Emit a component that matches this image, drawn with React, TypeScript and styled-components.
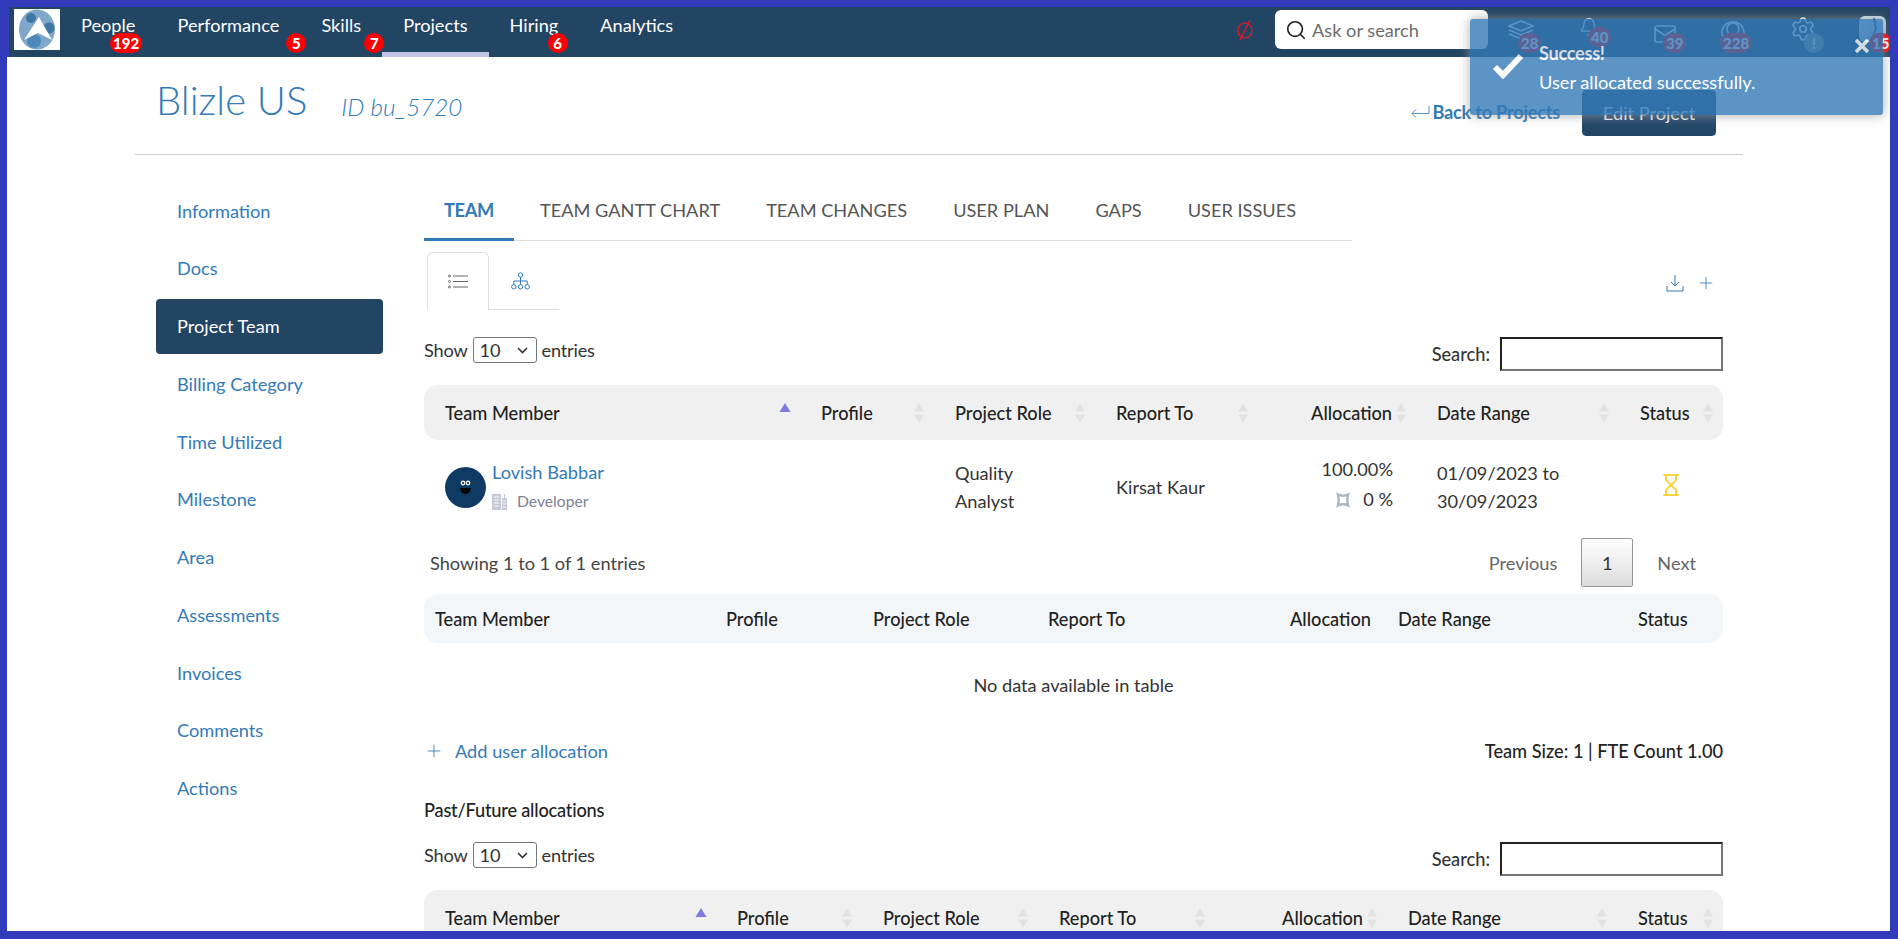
import React from "react";
import styled, { createGlobalStyle } from "styled-components";
import { Search, Bell, Mail, Settings, Plus, Hourglass } from "lucide-react";

const Global = createGlobalStyle`
  html, body { margin: 0; padding: 0; background: #fff; }
  body { font-family: Lato, "Open Sans", "Liberation Sans", sans-serif; color: #333; }
  * { box-sizing: border-box; }
`;

const Page = styled.div`
  width: 1898px; height: 939px; overflow: hidden; position: relative; background: #fff;
  border-style: solid; border-color: #323cbb; border-width: 7px 8px 8px 7px;
`;

/* top bar */
const Nav = styled.header`
  height: 50px; display: flex; background: #234564; border-left: 2px solid #323cbb;
`;
const LogoBox = styled.div`
  width: 46px; height: 41px; margin: 2px 0 0 5px; background: #fff; display: flex;
  align-items: center; justify-content: center;
`;
const NavItem = styled.a<{ $active?: boolean }>`
  position: relative; padding: 0 21px; height: 50px; line-height: 37px; color: #fff; font-size: 18.2px;
  border-bottom: 5px solid ${(p) => (p.$active ? "#c0c4e4" : "transparent")};
`;
const Badge = styled.span<{ $x: number; $y?: number; $bg?: string }>`
  position: absolute; left: ${(p) => p.$x}px; top: ${(p) => p.$y ?? 26}px; height: 20px; min-width: 20px;
  padding: 0 3px; border-radius: 10px; background: ${(p) => p.$bg ?? "#f00"}; color: #fff;
  font-size: 15px; font-weight: 900; line-height: 20px; text-align: center;
`;
const NavRight = styled.div`
  margin-left: auto; display: flex; align-items: flex-start; padding-right: 4px;
`;
const NoSign = styled.svg`
  width: 18px; height: 22px; margin: 12px 21px 0 0;
`;
const SearchBox = styled.div`
  width: 213px; height: 39px; margin-top: 3px; background: #fff; border-radius: 6px; display: flex;
  align-items: center; padding-left: 10px; gap: 5px; color: #666; font-size: 18.2px; color: #6c6c6c;
`;
const IconCell = styled.div<{ $ml: number; $w: number; $pt: number }>`
  position: relative; margin-left: ${(p) => p.$ml}px; width: ${(p) => p.$w}px; padding-top: ${(p) => p.$pt}px;
  color: #fff; line-height: 0;
`;
const UserThumb = styled.div`
  width: 27px; height: 26px; border-radius: 6px; background: linear-gradient(135deg, #e8eef5, #9db8d8);
  overflow: hidden;
`;

/* toast */
const Toast = styled.div`
  position: absolute; left: 1463px; top: 12px; width: 413px; height: 96px; background: #337ab7; opacity: .8;
  border-radius: 3px; box-shadow: 0 0 12px #999; color: #fff; padding: 23px 0 0 69px; font-size: 18.2px;
`;
const ToastCheck = styled.svg`
  position: absolute; left: 22px; top: 34px; width: 32px; height: 26px;
`;
const ToastTitle = styled.div`
  font-weight: 700; line-height: 22px; letter-spacing: -.3px;
`;
const ToastMsg = styled.div`
  line-height: 22px; margin-top: 7px;
`;
const ToastClose = styled.svg`
  position: absolute; right: 14px; top: 20px; width: 14px; height: 14px;
`;

/* page */
const Wrap = styled.div`
  margin-left: 128px; width: 1608px;
`;
const Header = styled.div`
  height: 98px; border-bottom: 1px solid #ccc; display: flex; align-items: flex-start; padding-left: 21px;
`;
const Title = styled.h1`
  margin: 18px 0 0; font-size: 40px; line-height: 50px; font-weight: 300; color: #337ab7;
`;
const SubId = styled.em`
  margin: 35px 0 0 34px; font-size: 24.2px; line-height: 30px; font-weight: 300; color: #337ab7;
`;
const HeadActions = styled.div`
  margin-left: auto; display: flex; align-items: flex-start; padding-right: 27px;
`;
const BackLink = styled.a`
  margin-top: 43px; display: flex; align-items: center; gap: 3px; color: #337ab7; font-size: 18.2px;
  font-weight: 700; line-height: 24px; letter-spacing: -.25px;
`;
const EditBtn = styled.button`
  margin: 33px 0 0 22px; width: 134px; height: 46px; border: 1px solid #234564; border-radius: 4px;
  background: linear-gradient(#2c5680, #234564); color: #eee; font: 400 18.2px Lato, sans-serif;
`;
const Body = styled.div`
  display: flex; padding-left: 21px; gap: 41px;
`;
const Side = styled.nav`
  width: 227px; margin-top: 28px; display: grid; grid-auto-rows: 55px; row-gap: 2.75px; align-self: flex-start;
`;
const SideItem = styled.a<{ $active?: boolean }>`
  display: flex; align-items: center; padding-left: 21px; border-radius: 4px; font-size: 18.2px;
  color: ${(p) => (p.$active ? "#fff" : "#337ab7")}; background: ${(p) => (p.$active ? "#234564" : "transparent")};
`;
const Main = styled.main`
  width: 1299px;
`;
const Tabs = styled.div`
  width: 928px; height: 57px; margin-top: 29px; display: flex; border-bottom: 1px solid #ddd;
`;
const Tab = styled.a<{ $active?: boolean }>`
  height: 57px; padding: 0 20px; margin-right: 6px; line-height: 52px; font-size: 18.2px; white-space: nowrap;
  font-weight: ${(p) => (p.$active ? 700 : 400)}; color: ${(p) => (p.$active ? "#337ab7" : "#555")};
  border-bottom: 3px solid ${(p) => (p.$active ? "#337ab7" : "transparent")};
  ${(p) => p.$active && "letter-spacing:-.3px;"}
`;
const SubRow = styled.div`
  margin-top: 11px; display: flex; justify-content: space-between; align-items: center; padding: 0 7px 0 3px;
`;
const SubTabs = styled.div`
  display: flex; height: 58px;
`;
const SubTab = styled.div<{ $active?: boolean }>`
  width: ${(p) => (p.$active ? 62 : 70)}px; display: flex; align-items: center; justify-content: ${(p) => (p.$active ? "center" : "flex-start")};
  padding-left: ${(p) => (p.$active ? 0 : 22)}px; color: ${(p) => (p.$active ? "#666" : "#337ab7")};
  border: 1px solid #ddd; border-width: ${(p) => (p.$active ? "1px 1px 0 1px" : "0 0 1px 0")};
  border-radius: ${(p) => (p.$active ? "6px 6px 0 0" : "0")};
`;
const Actions = styled.div`
  display: flex; align-items: center; gap: 12px; color: #337ab7; margin-top: 3px;
`;
const ToolRow = styled.div<{ $mt: number }>`
  margin-top: ${(p) => p.$mt}px; display: flex; justify-content: space-between; height: 34px; font-size: 18.2px;
`;
const ShowGroup = styled.div`
  display: flex; align-items: flex-start; gap: 5px; line-height: 26px; letter-spacing: -.2px;
`;
const Select = styled.div`
  width: 64px; height: 26px; border: 1px solid #767676; border-radius: 3px; padding-left: 6px; display: flex;
  align-items: center; justify-content: space-between; padding-right: 8px; font-size: 18.2px;
`;
const SearchGroup = styled.label`
  display: flex; align-items: center; gap: 10px; font-weight: 500;
`;
const SearchInput = styled.input`
  width: 223px; height: 34px; border: 2px inset #767676; background: #fff;
`;
const Grid = styled.div<{ $cols: string }>`
  display: grid; grid-template-columns: ${(p) => p.$cols};
`;
const HeadRow = styled(Grid)<{ $bg: string; $h: number; $mt: number }>`
  margin-top: ${(p) => p.$mt}px; height: ${(p) => p.$h}px; background: ${(p) => p.$bg}; border-radius: 14px;
  font-weight: 500; font-size: 18.2px; color: #222;
`;
const HeadCell = styled.div<{ $pl: number; $end?: boolean }>`
  display: flex; align-items: center; padding: 0 9px 0 ${(p) => p.$pl}px; white-space: nowrap;
  justify-content: ${(p) => (p.$end ? "flex-end" : "space-between")}; gap: 3px;
`;
const SortSvg = styled.svg`
  width: 12px; height: 22px; flex: none;
`;
const DataRow = styled(Grid)`
  height: 94px; font-size: 18.2px; align-items: center;
`;
const Cell = styled.div<{ $right?: boolean }>`
  padding: 0 8px 0 21px; line-height: 28px; text-align: ${(p) => (p.$right ? "right" : "left")};
`;
const RightCell = styled(Cell)`
  padding-right: 23px; margin-top: -7px; line-height: 30px;
`;
const Person = styled.div`
  display: flex; gap: 6px; align-items: flex-start; margin-top: -3px;
`;
const Avatar = styled.svg`
  width: 41px; height: 41px; margin-top: 8px; flex: none;
`;
const PersonName = styled.a`
  display: block; color: #337ab7; font-size: 18.2px; line-height: 26px;
`;
const PersonRole = styled.div`
  display: flex; align-items: center; gap: 10px; color: #7f7f95; font-size: 15.7px; line-height: 22px; margin-top: 5px;
`;
const AllocIcon = styled.svg`
  width: 16px; height: 16px; vertical-align: -2px; margin-right: 12px;
`;
const StatusIcon = styled.div`
  padding-left: 40px; color: #f7d53e; line-height: 0; margin-top: -5px;
`;
const Footer = styled.div`
  display: flex; justify-content: space-between; align-items: center; height: 49px; margin-top: 4px; padding: 0 27px 0 6px;
  font-size: 18.2px; color: #444;
`;
const Pager = styled.div`
  display: flex; align-items: center; color: #666; gap: 24px;
`;
const PageNo = styled.span`
  width: 52px; height: 49px; display: flex; align-items: center; justify-content: center; color: #333;
  border: 1px solid #979797; border-radius: 2px; background: linear-gradient(#fff, #dcdcdc);
`;
const EmptyRow = styled.div`
  height: 84px; display: flex; align-items: center; justify-content: center; font-size: 18.2px; color: #333;
`;
const AddRow = styled.div`
  display: flex; justify-content: space-between; align-items: center; height: 48px; font-size: 18.2px;
`;
const AddLink = styled.a`
  display: flex; align-items: center; gap: 11px; color: #337ab7;
`;
const TeamSize = styled.div`
  font-weight: 500; color: #222;
`;
const PastTitle = styled.div`
  margin-top: 19px; height: 32px; line-height: 32px; font-size: 18.2px; font-weight: 500; color: #222; letter-spacing: -.2px;
`;

const Sort = ({ active }: { active?: boolean }) => (
  <SortSvg viewBox="0 0 12 22">
    {active ? (
      <path d="M6 1 L11.5 10 H0.5 Z" fill="#7c7ce0" />
    ) : (
      <>
        <path d="M6 1 L11 9.5 H1 Z" fill="#e2e2e2" />
        <path d="M6 21 L11 12.5 H1 Z" fill="#e2e2e2" />
      </>
    )}
  </SortSvg>
);

const Logo = () => (
  <svg width="40" height="41" viewBox="0 0 40 41">
    <ellipse cx="20" cy="20.5" rx="18" ry="20" fill="#7ea7c9" />
    <circle cx="14" cy="9" r="5" fill="#3f76a3" />
    <circle cx="32" cy="19" r="5.5" fill="#3f76a3" />
    <circle cx="17" cy="32" r="7" fill="#4c88ba" />
    <path d="M22 8 L35 31 L21 24 L7 31 Z" fill="#fff" />
  </svg>
);
const ListIcon = () => (
  <svg width="20" height="15" viewBox="0 0 20 15" fill="none" stroke="currentColor" strokeWidth="1">
    <path d="M5 2h15M5 7.5h15M5 13h15" />
    <circle cx="1.5" cy="2" r="1" />
    <circle cx="1.5" cy="7.5" r="1" />
    <circle cx="1.5" cy="13" r="1" />
  </svg>
);
const TreeIcon = () => (
  <svg width="19" height="18" viewBox="0 0 19 18" fill="none" stroke="currentColor" strokeWidth="1">
    <circle cx="9.5" cy="3" r="2.2" />
    <path d="M9.5 5.2V9M2.8 12.5V9h13.4v3.5M9.5 9v3.5" />
    <circle cx="2.8" cy="14.8" r="2.2" />
    <circle cx="9.5" cy="14.8" r="2.2" />
    <circle cx="16.2" cy="14.8" r="2.2" />
  </svg>
);
const Download = () => (
  <svg width="18" height="18" viewBox="0 0 18 18" fill="none" stroke="currentColor" strokeWidth="1">
    <path d="M9 1v11M5 8l4 4 4-4M1 12v5h16v-5" />
  </svg>
);
const Layers = () => (
  <svg width="26" height="20" viewBox="0 0 26 20" fill="none" stroke="currentColor" strokeWidth="1.6">
    <path d="M13 1 L25 6 L13 11 L1 6 Z" />
    <path d="M1 10 L13 15 L25 10M1 14 L13 19 L25 14" />
  </svg>
);
const Ring = () => (
  <svg width="24" height="22" viewBox="0 0 24 22" fill="none" stroke="currentColor" strokeWidth="1.6">
    <path d="M3 21A11 11 0 1 1 21 21" />
    <path d="M7.5 15a6 6 0 1 1 9 0" />
  </svg>
);
const Cookie = () => (
  <Avatar viewBox="0 0 41 41">
    <circle cx="20.5" cy="20.5" r="20.5" fill="#0e3a63" />
    <circle cx="18" cy="16" r="2.4" fill="#eee" />
    <circle cx="23" cy="16" r="2.4" fill="#eee" />
    <circle cx="18" cy="16" r="1" fill="#111" />
    <circle cx="23" cy="16" r="1" fill="#111" />
    <path d="M15 21 H26 A5.5 6 0 0 1 15 21 Z" fill="#050505" />
  </Avatar>
);
const OfficeIcon = () => (
  <svg width="15" height="17" viewBox="0 0 15 17" fill="#c6c8d8">
    <path d="M0 1h9v16H0zM10 5h5v12h-5zM12 1h1v4h-1z" />
    <path d="M2 4h5M2 7h5M2 10h5M2 13h5M11 8h3M11 11h3M11 14h3" stroke="#fff" strokeWidth=".9" />
  </svg>
);
const AllocMark = () => (
  <AllocIcon viewBox="0 0 16 16" fill="none" stroke="#a5b7c8" strokeWidth="2.4">
    <path d="M3 2.5C6 4 10 4 13 2.5C12 6 12 10 13 13.5C10 12 6 12 3 13.5C4 10 4 6 3 2.5Z" />
  </AllocIcon>
);

const T1 = "376px 134px 161px 163px 158px 203px 104px";
const T2 = "291px 147px 175px 242px 108px 240px 96px";
const T3 = "292px 146px 176px 177px 172px 230px 106px";
const labels = ["Team Member", "Profile", "Project Role", "Report To", "Allocation", "Date Range", "Status"];
const side = ["Information", "Docs", "Project Team", "Billing Category", "Time Utilized", "Milestone", "Area", "Assessments", "Invoices", "Comments", "Actions"];
const tabs = ["TEAM", "TEAM GANTT CHART", "TEAM CHANGES", "USER PLAN", "GAPS", "USER ISSUES"];

const SortHead = ({ cols, mt }: { cols: string; mt: number }) => (
  <HeadRow $cols={cols} $bg="#f0f0f0" $h={55} $mt={mt}>
    {labels.map((l, i) => (
      <HeadCell key={l} $pl={21} $end={i === 4}>
        {l}
        <Sort active={i === 0} />
      </HeadCell>
    ))}
  </HeadRow>
);
const Tools = ({ mt }: { mt: number }) => (
  <ToolRow $mt={mt}>
    <ShowGroup>
      Show
      <Select>
        10
        <svg width="11" height="7" viewBox="0 0 11 7" fill="none" stroke="#333" strokeWidth="1.6">
          <path d="M1 1l4.5 4.5L10 1" />
        </svg>
      </Select>
      entries
    </ShowGroup>
    <SearchGroup>
      Search:
      <SearchInput aria-label="Search" />
    </SearchGroup>
  </ToolRow>
);

export default function App() {
  return (
    <Page>
      <Global />
      <Nav>
        <LogoBox>
          <Logo />
        </LogoBox>
        <NavItem>People<Badge $x={50}>192</Badge></NavItem>
        <NavItem>Performance<Badge $x={130}>5</Badge></NavItem>
        <NavItem>Skills<Badge $x={64}>7</Badge></NavItem>
        <NavItem $active>Projects</NavItem>
        <NavItem>Hiring<Badge $x={59}>6</Badge></NavItem>
        <NavItem>Analytics</NavItem>
        <NavRight>
          <NoSign viewBox="0 0 18 22" fill="none" stroke="#f0141e" strokeWidth="1.2">
            <ellipse cx="9" cy="11.5" rx="7" ry="7.5" />
            <path d="M14 1 L4 21" />
          </NoSign>
          <SearchBox>
            <Search size={22} color="#222" strokeWidth={1.8} />
            Ask or search
          </SearchBox>
          <IconCell $ml={20} $w={26} $pt={13}>
            <Layers />
            <Badge $x={10} $y={26}>28</Badge>
          </IconCell>
          <IconCell $ml={45} $w={18} $pt={10}>
            <Bell size={20} strokeWidth={1.6} />
            <Badge $x={9} $y={20}>40</Badge>
          </IconCell>
          <IconCell $ml={56} $w={24} $pt={15}>
            <Mail size={24} strokeWidth={1.6} />
            <Badge $x={10} $y={26}>39</Badge>
          </IconCell>
          <IconCell $ml={44} $w={24} $pt={11}>
            <Ring />
            <Badge $x={-1} $y={26}>228</Badge>
          </IconCell>
          <IconCell $ml={45} $w={26} $pt={9}>
            <Settings size={26} strokeWidth={1.6} />
            <Badge $x={14} $y={26} $bg="#7a8a92">!</Badge>
          </IconCell>
          <IconCell $ml={43} $w={27} $pt={9}>
            <UserThumb>
              <svg width="27" height="26" viewBox="0 0 27 26" fill="none" stroke="#2a5c9a" strokeWidth="2">
                <path d="M15 2 L17 12 L13 24" />
              </svg>
            </UserThumb>
            <Badge $x={10} $y={26}>15</Badge>
          </IconCell>
        </NavRight>
      </Nav>

      <Toast>
        <ToastCheck viewBox="0 0 32 26" fill="none" stroke="#fff" strokeWidth="6">
          <path d="M3 14 L11 22 L29 3" />
        </ToastCheck>
        <ToastTitle>Success!</ToastTitle>
        <ToastMsg>User allocated successfully.</ToastMsg>
        <ToastClose viewBox="0 0 14 14" stroke="#fff" strokeWidth="3.6">
          <path d="M1 1 L13 13 M13 1 L1 13" />
        </ToastClose>
      </Toast>

      <Wrap>
        <Header>
          <Title>Blizle US</Title>
          <SubId>ID bu_5720</SubId>
          <HeadActions>
            <BackLink>
              <svg width="19" height="14" viewBox="0 0 19 14" fill="none" stroke="#5b93c7" strokeWidth="1">
                <path d="M18 1v7.5H1M5 4.5 1 8.5l4 4" />
              </svg>
              Back to Projects
            </BackLink>
            <EditBtn>Edit Project</EditBtn>
          </HeadActions>
        </Header>
        <Body>
          <Side>
            {side.map((s) => (
              <SideItem key={s} $active={s === "Project Team"}>{s}</SideItem>
            ))}
          </Side>
          <Main>
            <Tabs>
              {tabs.map((t, i) => (
                <Tab key={t} $active={i === 0}>{t}</Tab>
              ))}
            </Tabs>
            <SubRow>
              <SubTabs>
                <SubTab $active><ListIcon /></SubTab>
                <SubTab><TreeIcon /></SubTab>
              </SubTabs>
              <Actions>
                <Download />
                <Plus size={20} strokeWidth={1} />
              </Actions>
            </SubRow>
            <Tools mt={27} />
            <SortHead cols={T1} mt={14} />
            <DataRow $cols={T1}>
              <Cell>
                <Person>
                  <Cookie />
                  <div>
                    <PersonName>Lovish Babbar</PersonName>
                    <PersonRole><OfficeIcon />Developer</PersonRole>
                  </div>
                </Person>
              </Cell>
              <Cell />
              <Cell>Quality<br />Analyst</Cell>
              <Cell>Kirsat Kaur</Cell>
              <RightCell $right>100.00%<br /><AllocMark />0 %</RightCell>
              <Cell>01/09/2023 to<br />30/09/2023</Cell>
              <StatusIcon><Hourglass size={24} strokeWidth={2} /></StatusIcon>
            </DataRow>
            <Footer>
              <span>Showing 1 to 1 of 1 entries</span>
              <Pager>
                <span>Previous</span>
                <PageNo>1</PageNo>
                <span>Next</span>
              </Pager>
            </Footer>
            <HeadRow $cols={T2} $bg="#f3f6f9" $h={49} $mt={7}>
              {labels.map((l) => (
                <HeadCell key={l} $pl={11}>{l}</HeadCell>
              ))}
            </HeadRow>
            <EmptyRow>No data available in table</EmptyRow>
            <AddRow>
              <AddLink><Plus size={20} strokeWidth={1} />Add user allocation</AddLink>
              <TeamSize>Team Size: 1 | FTE Count 1.00</TeamSize>
            </AddRow>
            <PastTitle>Past/Future allocations</PastTitle>
            <Tools mt={16} />
            <SortHead cols={T3} mt={14} />
          </Main>
        </Body>
      </Wrap>
    </Page>
  );
}
